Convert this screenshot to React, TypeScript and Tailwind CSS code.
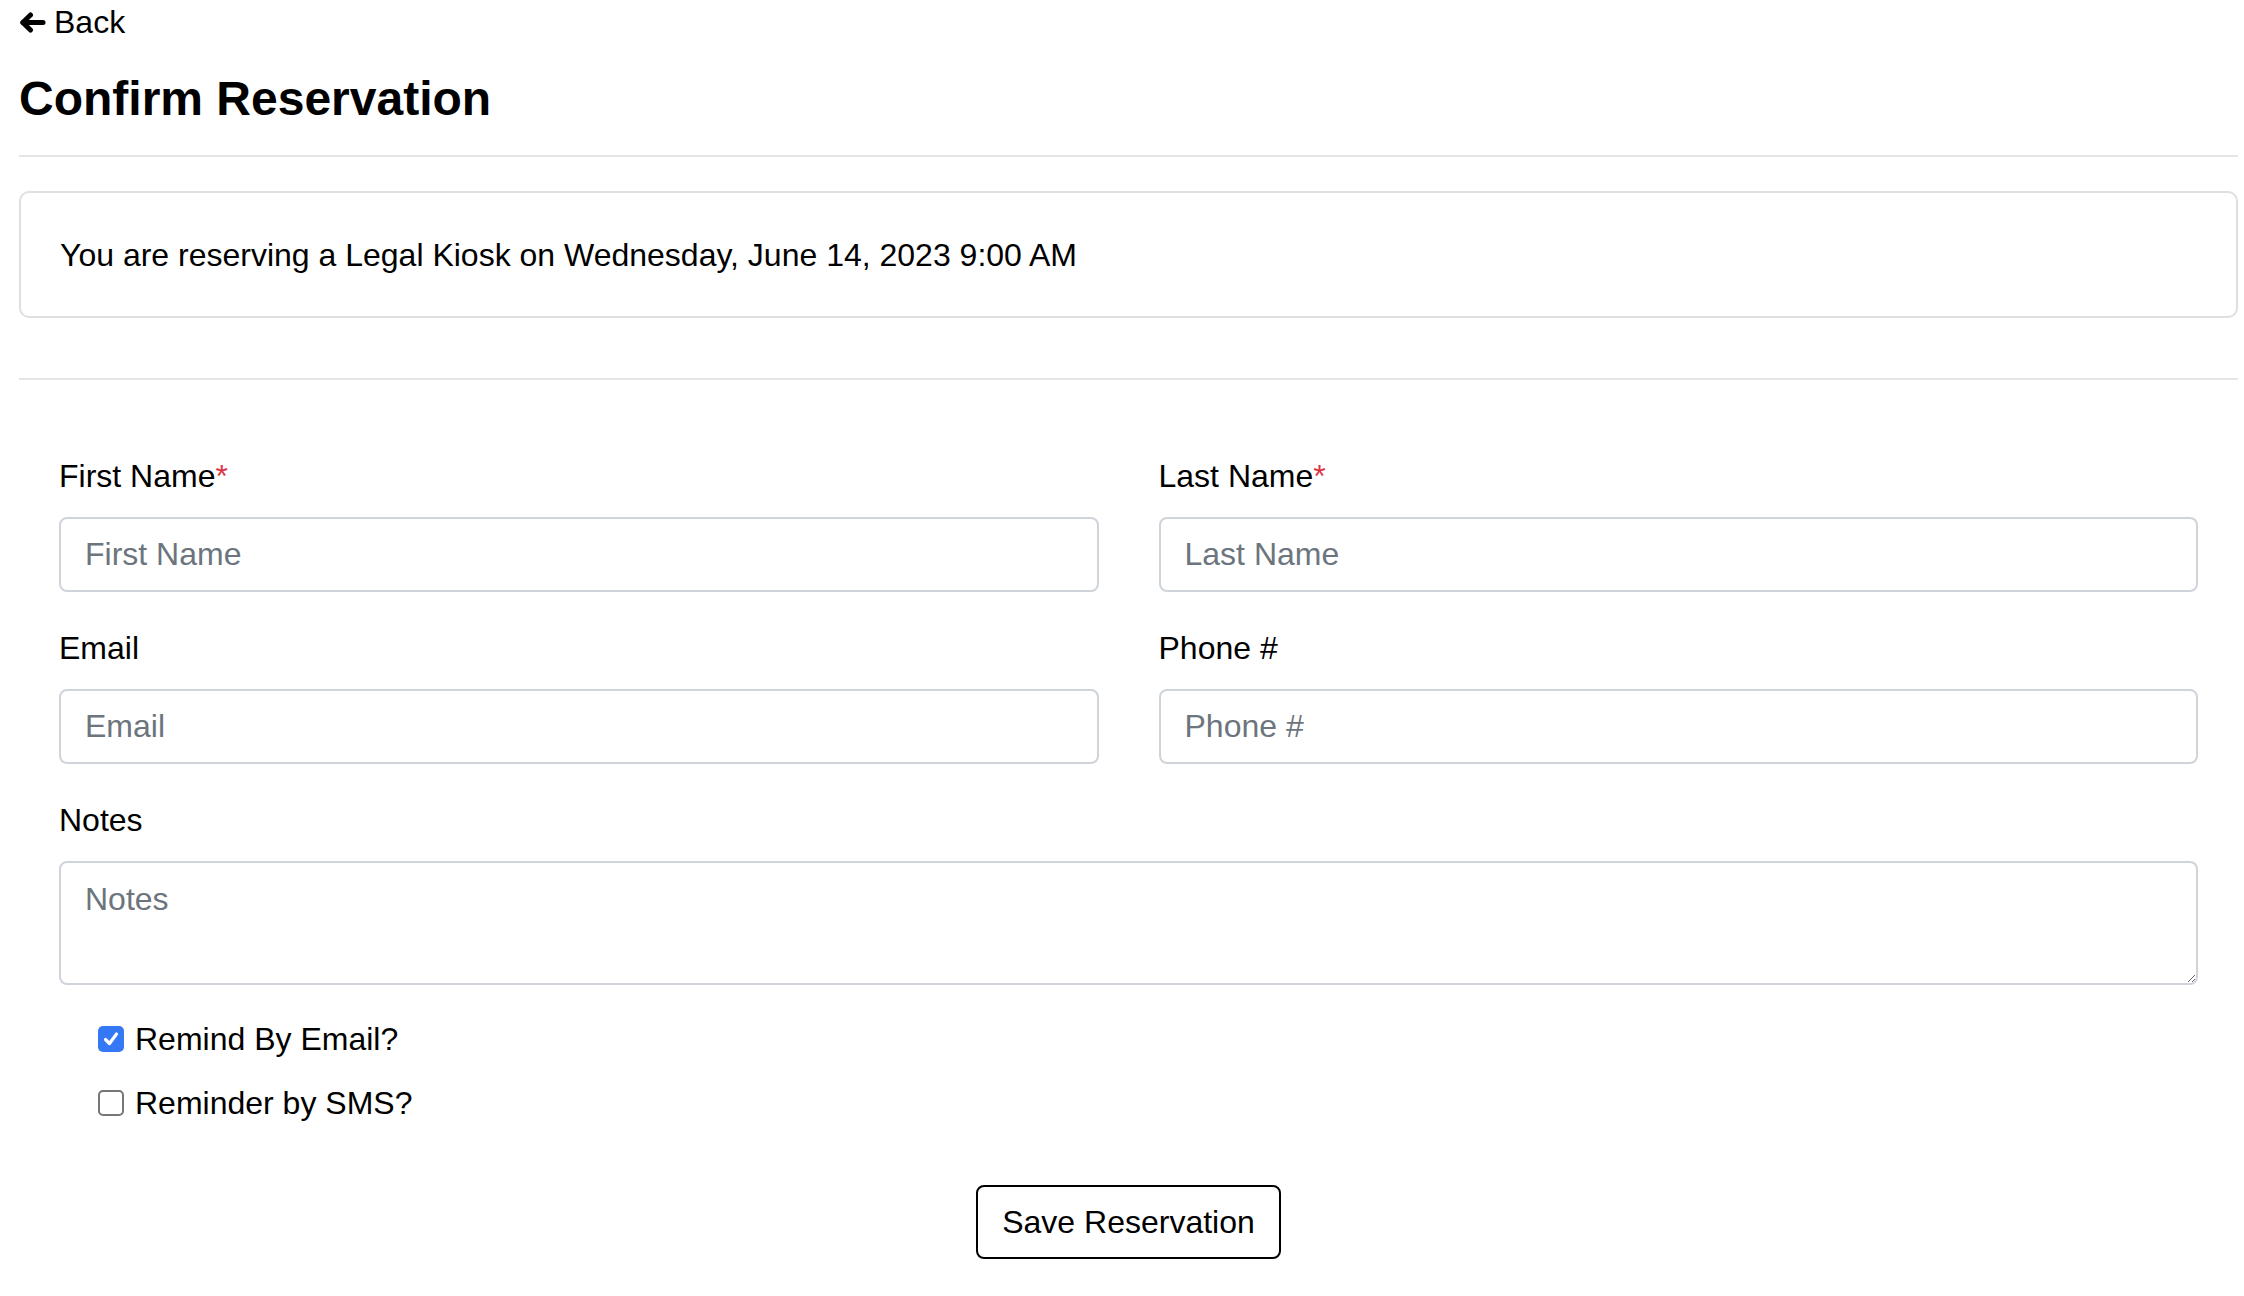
import React from "react";

function FieldLabel({ children, required }: { children: React.ReactNode; required?: boolean }) {
  return (
    <label className="block h-[48px] mb-[17px] text-[32px] leading-[48px] text-black">
      {children}
      {required && <span className="text-[#dc3545]">*</span>}
    </label>
  );
}

function TextField({ label, required }: { label: string; required?: boolean }) {
  return (
    <div>
      <FieldLabel required={required}>{label}</FieldLabel>
      <input
        type="text"
        placeholder={label}
        className="block w-full h-[75px] border-2 border-[#ced4da] rounded-[8px] px-[24px] text-[32px] leading-[48px] text-black bg-white outline-none placeholder:text-[#6c757d]"
      />
    </div>
  );
}

function Check({ checked, label }: { checked: boolean; label: string }) {
  return (
    <label className="flex items-center h-[48px] gap-[11px] text-[32px] leading-[48px] text-black">
      {checked ? (
        <span className="flex items-center justify-center w-[26px] h-[26px] rounded-[5px] bg-[#3478f6]">
          <svg width="18" height="18" viewBox="0 0 18 18" fill="none">
            <path d="M3.5 9.5 L7.5 13.5 L14.5 4" stroke="white" strokeWidth="3.2" strokeLinecap="round" strokeLinejoin="round" />
          </svg>
        </span>
      ) : (
        <span className="block w-[26px] h-[26px] rounded-[5px] border-2 border-[#767676] bg-white" />
      )}
      <span>{label}</span>
    </label>
  );
}

export default function App() {
  return (
    <div className="min-h-screen bg-white text-black font-['Liberation_Sans',Arial,Helvetica,sans-serif]">
      <div className="ml-[19px] w-[2219px]">
        <a className="flex items-center h-[44px] gap-[8px] text-[32px] leading-[44px] text-black">
          <svg width="27" height="21" viewBox="0 0 27 21" fill="none">
            <path d="M24 10.5 H4" stroke="black" strokeWidth="5" strokeLinecap="round" />
            <path d="M11.5 3 L3.8 10.5 L11.5 18" stroke="black" strokeWidth="5" strokeLinecap="round" strokeLinejoin="round" />
          </svg>
          <span>Back</span>
        </a>
        <h1 className="mt-[26px] text-[48px] font-bold leading-[58px]">Confirm Reservation</h1>
        <div className="mt-[27px] h-[2px] bg-[#e5e5e5]" />
        <div className="mt-[34px] border-2 border-[#dfdfdf] rounded-[10px] px-[39px] pt-[38px] pb-[37px] text-[32px] leading-[48px]">
          You are reserving a Legal Kiosk on Wednesday, June 14, 2023 9:00 AM
        </div>
        <div className="mt-[60px] h-[2px] bg-[#e5e5e5]" />
        <form className="mt-[72px] ml-[40px] mr-[40px]">
          <div className="grid grid-cols-2 gap-x-[60px] gap-y-[32px]">
            <TextField label="First Name" required />
            <TextField label="Last Name" required />
            <TextField label="Email" />
            <TextField label="Phone #" />
          </div>
          <div className="mt-[32px]">
            <FieldLabel>Notes</FieldLabel>
            <textarea
              rows={2}
              placeholder="Notes"
              className="block w-full h-[124px] border-2 border-[#ced4da] rounded-[8px] px-[24px] py-[12px] text-[32px] leading-[48px] text-black bg-white outline-none placeholder:text-[#6c757d]"
            />
          </div>
          <div className="mt-[30px] ml-[39px] flex flex-col gap-[16px]">
            <Check checked label="Remind By Email?" />
            <Check checked={false} label="Reminder by SMS?" />
          </div>
        </form>
        <div className="mt-[58px] flex justify-center">
          <button
            type="button"
            className="h-[74px] px-[24px] border-2 border-black rounded-[8px] bg-white text-[32px] leading-[48px] text-black"
          >
            Save Reservation
          </button>
        </div>
      </div>
    </div>
  );
}
